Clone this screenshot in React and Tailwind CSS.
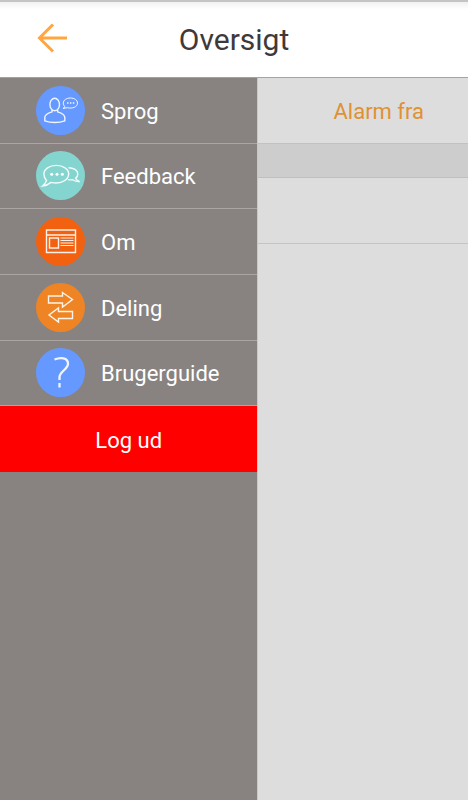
import React from 'react';

const stroke = {
  fill: 'none',
  stroke: '#fff',
  strokeWidth: 1.4,
  strokeOpacity: 0.9,
};

const items = [
  {
    label: 'Sprog',
    color: '#6699ff',
    icon: (
      <g {...stroke}>
        <ellipse cx="18.7" cy="18.5" rx="4.8" ry="6.2" />
        <path d="M16 23.8v2c-4.200 1.300-7.200 2.500-7.200 5.700v3.300q4.500 1.700 10 1.700t10-1.700v-3.300c0-3.200-3-4.400-7.200-5.700v-2" />
        <path strokeWidth="1" d="M29 20.7l-2 1.8 4.3-.8c5 1.2 10.200-.7 10.200-4.600 0-3-3.200-5.100-7.100-5.100s-7.100 2.100-7.100 5.100c0 1.500.6 2.600 1.700 3.600z" />
        <path strokeWidth="1.5" strokeDasharray="1.5 1.4" d="M31 17h7.5" />
      </g>
    ),
  },
  {
    label: 'Feedback',
    color: '#84d5cf',
    icon: (
      <g {...stroke}>
        <path d="M10.5 29.5c-.8 2.3-2.2 4.2-4 5.5 3-.2 6-1.5 8.500-3.600 9 2.300 17.700-2 17.700-8.300 0-5-5.500-8.700-12.400-8.700S7.900 18.100 7.900 23.100c0 2.400 1 4.700 2.600 6.400z" />
        <path d="M32.5 16.7c5 0 9.3 2.5 9.3 6.3 0 1.8-.8 3.2-2.2 4.4.9 1.500 2.300 2.600 4 3.300-2.600 0-5-.6-7-2-1.500.3-3 .2-4.600-.1" />
        <g fill="#fff" stroke="none">
          <circle cx="15.7" cy="23.3" r="1.5" />
          <circle cx="21" cy="23.3" r="1.5" />
          <circle cx="26.3" cy="23.3" r="1.5" />
        </g>
      </g>
    ),
  },
  {
    label: 'Om',
    color: '#f26110',
    icon: (
      <g {...stroke}>
        <path d="M10.5 13h29v22.5h-29zM10.5 18h29M13.5 21h9v10h-9z" />
        <path strokeWidth="1" d="M24.5 21h13M24.5 23.5h13M24.5 26h13M24.5 28.5h13" />
      </g>
    ),
  },
  {
    label: 'Deling',
    color: '#ee8424',
    icon: (
      <g {...stroke}>
        <path d="M12.5 13h14V9.5l10 7-10 7.5v-4h-14z" />
        <path d="M36.5 28.5h-14V25l-9.5 7 9.5 7v-3.5h14z" />
      </g>
    ),
  },
  {
    label: 'Brugerguide',
    color: '#6699ff',
    icon: (
      <g {...stroke} strokeWidth="2.3">
        <path d="M18.5 11.5c6-2.5 13.500-2 13.500 4.200 0 5.500-8.500 8-8.500 13.300v3M23.500 35v4.500" />
      </g>
    ),
  },
];

function MenuItem({ item }) {
  return (
    <li className="border-b border-[#aaa6a4]">
      <button type="button" className="flex h-full w-full cursor-pointer items-center gap-4 pl-9 text-left">
        <svg viewBox="0 0 49 49" className="size-[49px] shrink-0" aria-hidden="true">
          <circle cx="24.5" cy="24.5" r="24.5" fill={item.color} />
          {item.icon}
        </svg>
        <span className="pt-0.5">{item.label}</span>
      </button>
    </li>
  );
}

function App() {
  return (
    <div className="flex min-h-screen flex-col bg-[#dddddd] font-[Roboto,sans-serif] text-[22px]">
      <header className="grid h-[78px] grid-cols-[1fr_auto_1fr] items-center border-t-2 border-b border-t-[#c4c4c4] border-b-[#a3a3a3] bg-linear-to-b from-[#f0f0f0] to-white to-10%">
        <button type="button" aria-label="Tilbage" className="mb-1 ml-9 cursor-pointer justify-self-start">
          <svg viewBox="0 0 32 32" className="size-8" fill="none" stroke="#ffa640" strokeWidth="3" aria-hidden="true">
            <path d="M17 2.5L3.5 16 17 29.5M3.5 16H31" />
          </svg>
        </button>
        <h1 className="text-[30px] text-[#3f3a39]">Oversigt</h1>
      </header>

      <div className="flex grow">
        <nav className="w-[55%] bg-[#888381] text-white">
          <ul className="grid h-[394px] grid-rows-6">
            {items.map((item) => (
              <MenuItem key={item.label} item={item} />
            ))}
            <li>
              <button type="button" className="h-full w-full cursor-pointer bg-[#ff0000] pt-0.5">
                Log ud
              </button>
            </li>
          </ul>
        </nav>

        <main className="grow border-l border-[#c8c8c8]">
          <div className="flex h-[66px] items-center justify-end border-b border-[#c2c2c2] pt-0.5 pr-11">
            <button type="button" className="cursor-pointer text-[#e09132]">
              Alarm fra
            </button>
          </div>
          <div className="h-[34px] border-b border-[#bfbfbf] bg-[#cdcdcd]" />
          <div className="h-[66px] border-b border-[#c4c4c4]" />
        </main>
      </div>
    </div>
  );
}

export default App;
